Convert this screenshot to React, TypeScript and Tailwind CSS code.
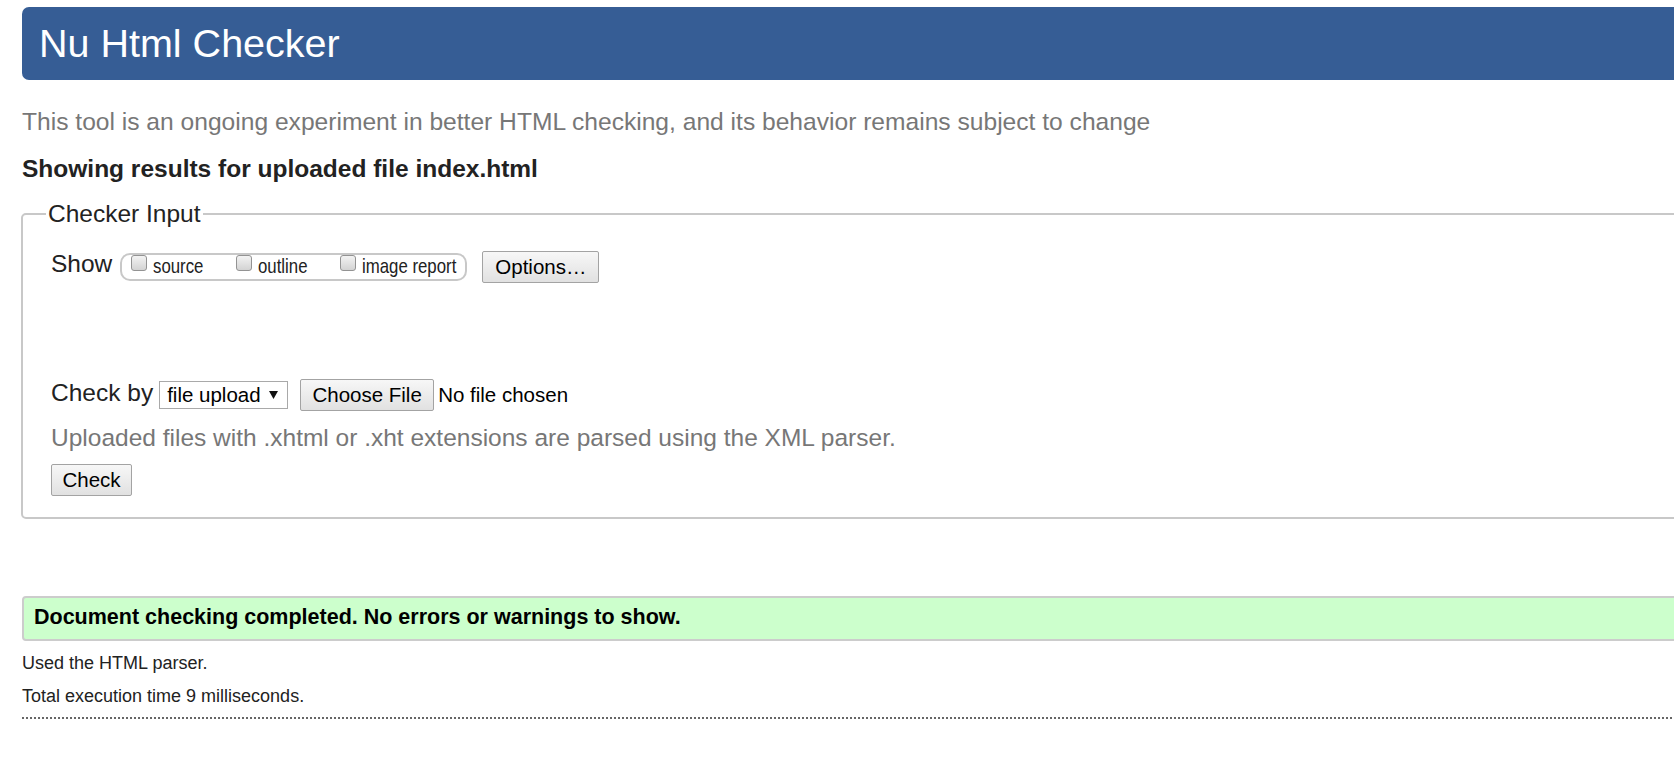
const btn =
  'flex items-center justify-center border border-[#a3a3a3] rounded-[2px] bg-linear-to-b from-[#f7f7f7] to-[#e1e1e1] text-[20.5px] leading-[30px] text-black'

// the option labels are drawn in a narrow face in the reference
function Box({ label, w }: { label: string; w: string }) {
  return (
    <label className="flex items-start gap-[6px]">
      <span className="block h-[16px] w-[16px] rounded-[3px] border border-[#939393] bg-linear-to-b from-[#f3f3f3] to-[#d3d3d3]" />
      <span className={`${w} whitespace-nowrap text-[21px] leading-[22px] text-[#222]`}>
        <span className="inline-block origin-left scale-x-[0.8]">{label}</span>
      </span>
    </label>
  )
}

export default function App() {
  return (
    <div className="min-h-screen w-full overflow-hidden bg-white font-['Liberation_Sans',Arial,sans-serif] text-[#222]">
      <div className="w-[1760px] pl-[22px] pt-[7px]">
        {/* Title bar */}
        <h1 className="rounded-[7px] bg-[#365d95] pb-[14px] pl-[17px] pt-[14px] text-[39.5px] font-normal leading-[45px] text-white">
          Nu Html Checker
        </h1>

        <p className="mt-[28px] text-[24.6px] leading-[28px] text-[#777]">
          This tool is an ongoing experiment in better HTML checking, and its behavior remains subject to change
        </p>
        <p className="mt-[19px] text-[24.5px] font-bold leading-[28px] text-[#222]">
          Showing results for uploaded file index.html
        </p>

        {/* Checker Input */}
        <fieldset className="-ml-px mt-[17px] rounded-[5px] border-2 border-[#c8c8c8] pb-[21px] pl-[28px] pt-[22px]">
          <legend className="-ml-[5px] px-[2px] text-[24.5px] leading-[28px] text-[#222]">Checker Input</legend>

          <div className="flex items-start">
            <span className="text-[24.5px] leading-[28px]">Show</span>
            <div className="ml-[8px] mt-[3px] flex items-start gap-[32px] rounded-[10px] border-2 border-[#c8c8c8] pb-[2px] pl-[9px] pr-[8px]">
              <Box label="source" w="w-[51px]" />
              <Box label="outline" w="w-[50px]" />
              <Box label="image report" w="w-[95px]" />
            </div>
            <button className={`${btn} ml-[15px] mt-[1px] h-[32px] px-[12px]`}>Options…</button>
          </div>

          <div className="mt-[96px] flex items-start">
            <span className="text-[24.5px] leading-[28px]">Check by</span>
            <div className="ml-[6px] mt-[2px] flex h-[28px] w-[129px] items-center justify-between border border-[#a9a9a9] bg-white pl-[7px] pr-[9px] text-[20.5px] leading-[26px] text-black">
              <span>file upload</span>
              <svg width="9" height="8" viewBox="0 0 9 8">
                <polygon points="0,0 9,0 4.5,8" fill="#111" />
              </svg>
            </div>
            <button className={`${btn} ml-[12px] h-[32px] w-[134px]`}>Choose File</button>
            <span className="ml-[4px] text-[20.5px] leading-[32px] text-black">No file chosen</span>
          </div>

          <p className="mt-[13px] text-[24.5px] leading-[28px] text-[#777]">
            Uploaded files with .xhtml or .xht extensions are parsed using the XML parser.
          </p>

          <button className={`${btn} mt-[12px] h-[32px] w-[81px]`}>Check</button>
        </fieldset>

        {/* Result */}
        <div className="mt-[77px] rounded-[4px] border-2 border-[#cccccc] bg-[#ccffcc] pb-[9px] pl-[10px] pt-[7px] text-[21.5px] font-bold leading-[25px] text-black">
          Document checking completed. No errors or warnings to show.
        </div>

        <p className="mt-[10px] text-[18px] leading-[24px] text-[#222]">Used the HTML parser.</p>
        <p className="mt-[9px] text-[18px] leading-[24px] text-[#222]">Total execution time 9 milliseconds.</p>
        <div className="mt-[9px] border-t-2 border-dotted border-[#666]" />
      </div>
    </div>
  )
}
